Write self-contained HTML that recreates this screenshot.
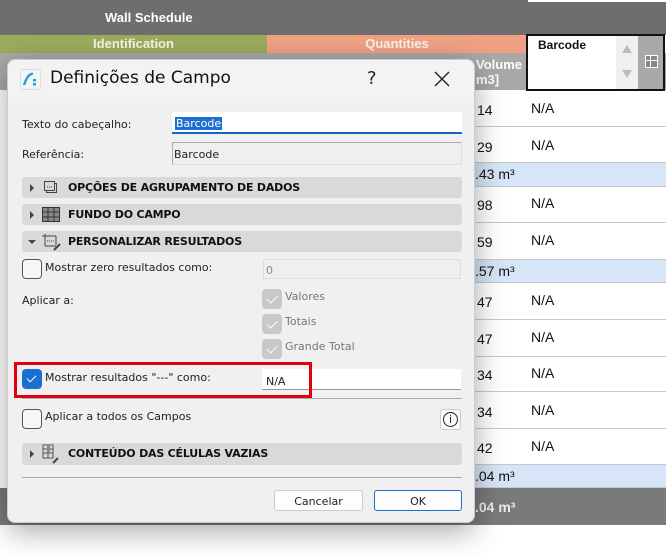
<!DOCTYPE html>
<html><head><meta charset="utf-8"><style>
*{box-sizing:border-box;margin:0;padding:0}
body{width:666px;height:557px;position:relative;overflow:hidden;background:#fff;font-family:"Liberation Sans",sans-serif}
.a{position:absolute}
.t{font-family:"DejaVu Sans","Liberation Sans",sans-serif;font-size:11px;color:#222}
.bar{position:absolute;left:22px;width:440px;height:21px;background:#d9d9d9;border-radius:3px}
.bar span{position:absolute;left:46px;top:4px;font-size:11px;font-weight:bold;font-family:"DejaVu Sans",sans-serif;color:#111;letter-spacing:-0.2px}
.tri{position:absolute;left:8px;top:7px;width:0;height:0;border-left:4px solid #444;border-top:4px solid transparent;border-bottom:4px solid transparent}
.cb{position:absolute;width:20px;height:20px;border:1px solid #555;border-radius:4px;background:#f7f7f7}
.gcb{position:absolute;left:262px;width:20px;height:20px;border-radius:4px;background:#c8c8c8}
.gcb:after{content:"";position:absolute;left:7px;top:4px;width:5px;height:9px;border-right:1.5px solid #fff;border-bottom:1.5px solid #fff;transform:rotate(45deg)}
.row{position:absolute;left:466px;width:200px;border-bottom:1px solid #c8c8c8;font-size:14px;color:#111}
.blue{background:#d6e6f8}
</style></head><body>
<div class="a" style="left:0;top:0;width:666px;height:35px;background:#6e6e6e"></div>
<div class="a" style="left:528px;top:0;width:138px;height:2px;background:#fff"></div>
<div class="a" style="left:105px;top:10px;color:#fff;font-weight:bold;font-size:13px">Wall Schedule</div>
<div class="a" style="left:0;top:35px;width:267px;height:18px;background:#9aac5c;color:#f4f4e4;font-weight:bold;font-size:13px;text-align:center;line-height:18px">Identification</div>
<div class="a" style="left:267px;top:35px;width:260px;height:18px;background:#f0a184;color:#fdf0ea;font-weight:bold;font-size:13px;text-align:center;line-height:18px">Quantities</div>
<div class="a" style="left:0;top:53px;width:666px;height:37px;background:#a9a9a9"></div>
<div class="a" style="left:476px;top:57px;color:#fff;font-weight:bold;font-size:13px;line-height:15px">Volume<br>m3]</div>
<div class="a" style="left:526px;top:34px;width:139px;height:57px;border:2px solid #111;background:#a9a9a9"></div>
<div class="a" style="left:528px;top:36px;width:88px;height:53px;background:#fff"></div>
<div class="a" style="left:538px;top:38px;font-size:12px;font-weight:bold;color:#111">Barcode</div>
<div class="a" style="left:616px;top:36px;width:22px;height:53px;background:#f0f0f0"></div>
<div class="a" style="left:622px;top:45px;border-left:5px solid transparent;border-right:5px solid transparent;border-bottom:8px solid #bbb"></div>
<div class="a" style="left:622px;top:70px;border-left:5px solid transparent;border-right:5px solid transparent;border-top:8px solid #bbb"></div>
<div class="a" style="left:645px;top:55px;width:13px;height:13px;border:1px solid #fff;background:linear-gradient(#fff,#fff) 4px 0/1px 13px no-repeat,linear-gradient(#fff,#fff) 0 4px/13px 1px no-repeat,#888"></div>

<div class="row" style="top:90px;height:37px"><span class="a" style="left:11px;top:12px">14</span><span class="a" style="left:65px;top:10px">N/A</span></div>
<div class="row" style="top:127px;height:36px"><span class="a" style="left:11px;top:12px">29</span><span class="a" style="left:65px;top:10px">N/A</span></div>
<div class="row blue" style="top:163px;height:24px"><span class="a" style="left:9px;top:3px">.43 m³</span></div>
<div class="row" style="top:187px;height:36px"><span class="a" style="left:11px;top:10px">98</span><span class="a" style="left:65px;top:8px">N/A</span></div>
<div class="row" style="top:223px;height:37px"><span class="a" style="left:11px;top:11px">59</span><span class="a" style="left:65px;top:9px">N/A</span></div>
<div class="row blue" style="top:260px;height:23px"><span class="a" style="left:9px;top:3px">.57 m³</span></div>
<div class="row" style="top:283px;height:37px"><span class="a" style="left:11px;top:11px">47</span><span class="a" style="left:65px;top:9px">N/A</span></div>
<div class="row" style="top:320px;height:37px"><span class="a" style="left:11px;top:11px">47</span><span class="a" style="left:65px;top:9px">N/A</span></div>
<div class="row" style="top:357px;height:35px"><span class="a" style="left:11px;top:10px">34</span><span class="a" style="left:65px;top:8px">N/A</span></div>
<div class="row" style="top:392px;height:37px"><span class="a" style="left:11px;top:12px">34</span><span class="a" style="left:65px;top:10px">N/A</span></div>
<div class="row" style="top:429px;height:36px"><span class="a" style="left:11px;top:11px">42</span><span class="a" style="left:65px;top:9px">N/A</span></div>
<div class="row blue" style="top:465px;height:23px"><span class="a" style="left:9px;top:3px">.04 m³</span></div>
<div class="a" style="left:0;top:488px;width:666px;height:37px;background:#7a7a7a"><span class="a" style="left:475px;top:11px;color:#eee;font-weight:bold;font-size:14px">.04 m³</span></div>

<div class="a" style="left:7px;top:59px;width:468px;height:464px;background:#f0f0f0;border-radius:8px;box-shadow:0 8px 30px rgba(0,0,0,.35);border:1px solid #ccc;overflow:hidden">
 <div class="a" style="left:0;top:0;width:468px;height:43px;background:#f3f3f3"></div>
</div>
<svg class="a" style="left:20px;top:69px" width="21" height="21"><rect x="0.5" y="0.5" width="20" height="20" rx="2" fill="#f4f4f4" stroke="#ddd"/><path d="M4 16 Q8 4 13 5" stroke="#17a5d8" stroke-width="2.4" fill="none"/><rect x="13" y="10" width="3" height="2.5" fill="#17a5d8"/><rect x="13" y="14" width="3" height="2.5" fill="#17a5d8"/></svg>
<div class="a" style="left:50px;top:68px;font-family:'DejaVu Sans',sans-serif;font-size:17px;color:#111">Definições de Campo</div>
<div class="a" style="left:367px;top:68px;font-family:'DejaVu Sans',sans-serif;font-size:18px;color:#222">?</div>
<svg class="a" style="left:434px;top:71px" width="16" height="16"><path d="M1 1L15 15M15 1L1 15" stroke="#222" stroke-width="1.4"/></svg>

<div class="a t" style="left:22px;top:118px">Texto do cabeçalho:</div>
<div class="a" style="left:172px;top:112px;width:290px;height:22px;background:#fff;border-bottom:2px solid #1565c0"></div>
<div class="a t" style="left:175px;top:117px;background:#1a6fd0;color:#fff;padding:0 1px">Barcode</div>
<div class="a t" style="left:22px;top:148px">Referência:</div>
<div class="a" style="left:172px;top:142px;width:290px;height:23px;background:#efefef;border:1px solid #aaa;border-right-color:#ddd;border-bottom-color:#ddd"></div>
<div class="a t" style="left:174px;top:148px">Barcode</div>

<div class="bar" style="top:177px"><div class="tri"></div>
<svg class="a" style="left:22px;top:4px" width="14" height="14"><rect x="2.5" y="2.5" width="10" height="9" fill="none" stroke="#444"/><rect x="0.5" y="0.5" width="10" height="9" fill="#d9d9d9" stroke="#444"/><path d="M3 6h6" stroke="#444" stroke-dasharray="1 1"/></svg><span>OPÇÕES DE AGRUPAMENTO DE DADOS</span></div>
<div class="bar" style="top:204px"><div class="tri"></div>
<svg class="a" style="left:20px;top:3px" width="18" height="15"><rect x="0.5" y="0.5" width="17" height="14" fill="#888" stroke="#333"/><path d="M6 0v15M12 0v15M0 5h18M0 10h18" stroke="#333"/></svg><span>FUNDO DO CAMPO</span></div>
<div class="bar" style="top:231px"><div class="a" style="left:6px;top:9px;border-top:4px solid #444;border-left:4px solid transparent;border-right:4px solid transparent"></div>
<svg class="a" style="left:20px;top:2px" width="20" height="18"><path d="M3 1v12M0 3h14M14 3v9M3 13h11" stroke="#444" fill="none"/><path d="M5 8h7" stroke="#444" stroke-dasharray="1 1"/><path d="M12 17l6-6" stroke="#444" stroke-width="2"/></svg><span>PERSONALIZAR RESULTADOS</span></div>

<div class="cb" style="left:22px;top:259px"></div>
<div class="a t" style="left:45px;top:261px">Mostrar zero resultados como:</div>
<div class="a" style="left:263px;top:259px;width:198px;height:20px;border:1px solid #ddd;background:#efefef"></div>
<div class="a t" style="left:266px;top:264px;color:#888">0</div>
<div class="a t" style="left:22px;top:294px">Aplicar a:</div>
<div class="gcb" style="top:289px"></div><div class="a t" style="left:285px;top:290px;color:#777">Valores</div>
<div class="gcb" style="top:314px"></div><div class="a t" style="left:285px;top:315px;color:#777">Totais</div>
<div class="gcb" style="top:339px"></div><div class="a t" style="left:285px;top:340px;color:#777">Grande Total</div>

<div class="a" style="left:22px;top:369px;width:20px;height:20px;border-radius:4px;background:#1a6fd0"></div>
<div class="a" style="left:29px;top:373px;width:5px;height:9px;border-right:1.5px solid #fff;border-bottom:1.5px solid #fff;transform:rotate(45deg)"></div>
<div class="a t" style="left:45px;top:371px">Mostrar resultados "---" como:</div>
<div class="a" style="left:262px;top:369px;width:199px;height:21px;background:#fff;border-bottom:1px solid #999"></div>
<div class="a t" style="left:266px;top:375px">N/A</div>
<div class="a" style="left:14px;top:362px;width:298px;height:36px;border:3px solid #e0000f"></div>
<div class="a" style="left:22px;top:398px;width:440px;height:1px;background:#aaa"></div>

<div class="cb" style="left:22px;top:409px"></div>
<div class="a t" style="left:45px;top:410px">Aplicar a todos os Campos</div>
<div class="a" style="left:440px;top:409px;width:21px;height:21px;border:1px solid #ccc;border-radius:3px;background:#fafafa"></div>
<div class="a" style="left:443px;top:412px;width:15px;height:15px;border:1.3px solid #222;border-radius:50%;font-size:11px;line-height:13px;text-align:center;font-family:'DejaVu Sans',sans-serif;color:#222">i</div>

<div class="bar" style="top:443px;height:22px"><div class="tri"></div>
<svg class="a" style="left:20px;top:1px" width="20" height="20"><path d="M1 1h10v13H1zM1 5h10M1 9h10M6 1v13" stroke="#555" fill="none"/><rect x="5" y="1" width="3" height="7" fill="#888"/><path d="M11 19l5-5" stroke="#444" stroke-width="2"/></svg><span style="left:46px">CONTEÚDO DAS CÉLULAS VAZIAS</span></div>
<div class="a" style="left:22px;top:477px;width:440px;height:1px;background:#aaa"></div>

<div class="a" style="left:274px;top:490px;width:89px;height:21px;background:#fdfdfd;border:1px solid #ccc;border-radius:3px;text-align:center;line-height:19px" ><span class="t">Cancelar</span></div>
<div class="a" style="left:374px;top:490px;width:88px;height:21px;background:#fdfdfd;border:1px solid #1a6fd0;border-radius:3px;text-align:center;line-height:19px"><span class="t">OK</span></div>
</body></html>
